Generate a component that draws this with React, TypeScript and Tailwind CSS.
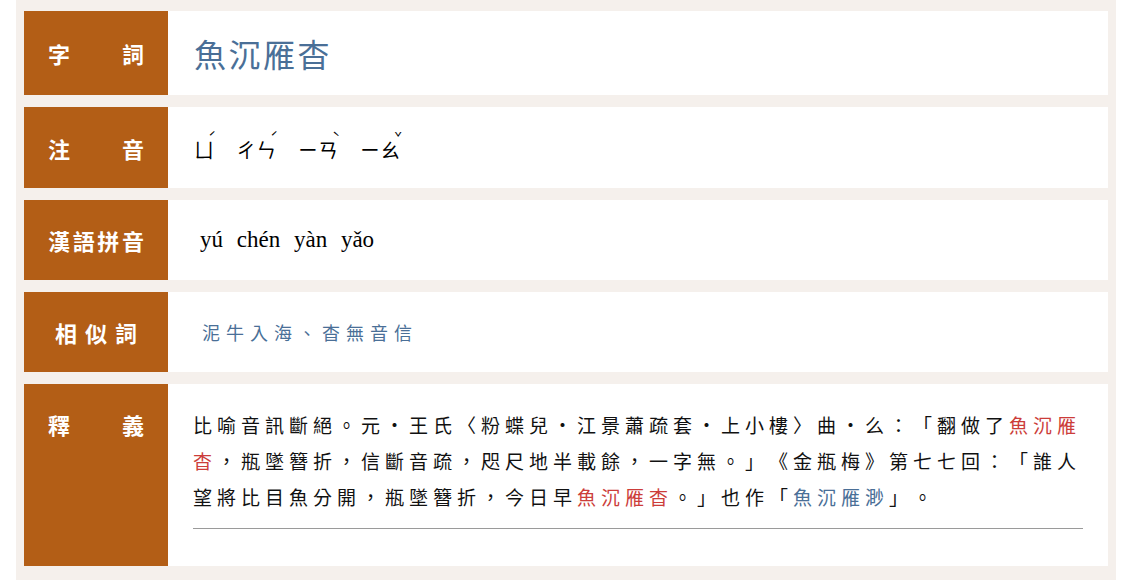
const cjk = "font-['Noto_Sans_CJK_TC','Noto_Sans',sans-serif]";

type Syllable = { parts: string; tone?: string };

const zhuyin: Syllable[] = [
  { parts: "ㄩ", tone: "ˊ" },
  { parts: "ㄔㄣ", tone: "ˊ" },
  { parts: "ㄧㄢ", tone: "ˋ" },
  { parts: "ㄧㄠ", tone: "ˇ" },
];

const Label = ({
  chars,
  spread = true,
  top,
}: {
  chars: string[];
  spread?: boolean;
  top?: boolean;
}) => (
  <div
    className={`w-[144px] shrink-0 bg-[#b35e16] px-6 flex ${
      top ? "items-start pt-[25px]" : "items-center"
    } ${spread ? "justify-between" : "justify-center gap-2"}`}
  >
    {chars.map((c, i) => (
      <span
        key={i}
        className={`${cjk} text-[22px] leading-[30px] font-bold text-white`}
      >
        {c}
      </span>
    ))}
  </div>
);

const Red = ({ children }: { children: string }) => (
  <span className="text-[#cc3d3a]">{children}</span>
);

export default function App() {
  return (
    <div className="min-h-[580px] bg-white">
      <div className="ml-[16px] w-[1100px] min-h-[580px] bg-[#f5f0ec] pt-[11px] pb-[14px] px-[8px] flex flex-col gap-[12px]">
        {/* 字詞 */}
        <div className="flex h-[84px]">
          <Label chars={["字", "詞"]} />
          <div className="flex-1 bg-white flex items-center pl-[26px]">
            <span
              className={`${cjk} text-[32px] tracking-[2.5px] text-[#4a6f97]`}
            >
              魚沉雁杳
            </span>
          </div>
        </div>

        {/* 注音 */}
        <div className="flex h-[81px]">
          <Label chars={["注", "音"]} />
          <div className="flex-1 bg-white flex items-center pl-[26px] pt-[4px]">
            <div className="flex gap-[22px]">
              {zhuyin.map((s, i) => (
                <span key={i} className="relative flex">
                  {s.parts.split("").map((p, j) => (
                    <span
                      key={j}
                      className={`${cjk} text-[20px] leading-[24px] text-black`}
                    >
                      {p}
                    </span>
                  ))}
                  <span
                    className={`${cjk} absolute -right-[2px] -top-[8px] text-[13px] leading-[14px] text-black`}
                  >
                    {s.tone}
                  </span>
                </span>
              ))}
            </div>
          </div>
        </div>

        {/* 漢語拼音 */}
        <div className="flex h-[80px]">
          <Label chars={["漢", "語", "拼", "音"]} />
          <div className="flex-1 bg-white flex items-center pl-[32px]">
            <span className="font-['Liberation_Serif',serif] text-[23px] [word-spacing:8px] text-black">
              yú chén yàn yǎo
            </span>
          </div>
        </div>

        {/* 相似詞 */}
        <div className="flex h-[80px]">
          <Label chars={["相", "似", "詞"]} spread={false} />
          <div className="flex-1 bg-white flex items-center pl-[34px]">
            <span
              className={`${cjk} text-[18px] tracking-[6px] text-[#4a6f97]`}
            >
              泥牛入海、杳無音信
            </span>
          </div>
        </div>

        {/* 釋義 */}
        <div className="flex h-[182px]">
          <Label chars={["釋", "義"]} top />
          <div className="flex-1 bg-white px-[25px] pt-[23px]">
            <p
              lang="zh-Hant"
              className={`${cjk} text-[19px] leading-[36px] tracking-[5px] text-[#111] [text-spacing-trim:space-all]`}
            >
              比喻音訊斷絕。元・王氏〈粉蝶兒・江景蕭疏套・上小樓〉曲・么：「翻做了
              <Red>魚沉雁杳</Red>
              ，瓶墜簪折，信斷音疏，咫尺地半載餘，一字無。」《金瓶梅》第七七回：「誰人望將比目魚分開，瓶墜簪折，今日早
              <Red>魚沉雁杳</Red>
              。」也作「<span className="text-[#4a6f97]">魚沉雁渺</span>」。
            </p>
            <div className="mt-[13px] border-t border-[#9a9a9a]" />
          </div>
        </div>
      </div>
    </div>
  );
}
